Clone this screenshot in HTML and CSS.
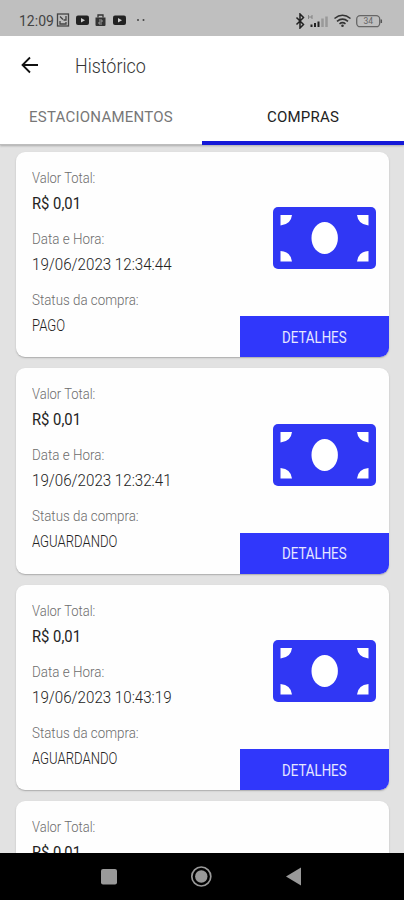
FILE: index.html
```
<!DOCTYPE html>
<html lang="pt-BR">
<head>
<meta charset="utf-8">
<meta name="viewport" content="width=device-width, initial-scale=1">
<title>Histórico</title>
<link rel="stylesheet" href="styles.css">
</head>
<body>
<svg class="defs" width="0" height="0" aria-hidden="true">
  <symbol id="banknote" viewBox="0 0 103 62">
    <rect width="103" height="62" rx="5" fill="#3037f4"/>
    <ellipse cx="51.7" cy="31" rx="13.2" ry="16" fill="#fff"/>
    <path fill="#fff" d="M7.500 8h11.500q-1 9.500-11.500 10.500zM95.500 8H84q1 9.500 11.500 10.500zM7.500 54.500h11.500q-1-9.500-11.500-10.500zM95.500 54.500H84q1-9.500 11.500-10.500z"/>
  </symbol>
</svg>
<div class="screen">
  <div class="status">
    <span class="clock"><span class="fit">12:09</span></span>
    <svg class="status-left" width="92" height="14" viewBox="0 0 92 14">
      <g fill="none" stroke="#444" stroke-width="1.300"><rect x="1.500" y="1" width="11" height="12"/><path d="M4 3.500l3 3M10 3v4H7.500M4 8v3h6V9"/></g>
      <rect x="20" y="2.500" width="13" height="9.500" rx="2" fill="#222"/><path d="M25 5l4 2.200-4 2.300z" fill="#ccc"/>
      <path d="M39.500 4.500h10V12a1 1 0 0 1-1 1h-8a1 1 0 0 1-1-1z" fill="#333"/><path d="M42 4.500V2h5v2.500" fill="none" stroke="#333" stroke-width="1.300"/><path d="M43 7h3v2h-3v2h3" fill="none" stroke="#999"/>
      <rect x="57" y="2.500" width="13" height="9.500" rx="2" fill="#222"/><path d="M62 5l4 2.200-4 2.300z" fill="#ccc"/>
      <circle cx="82" cy="7" r="1" fill="#444"/><circle cx="87.500" cy="7" r="1" fill="#444"/>
    </svg>
    <svg class="status-right" width="88" height="16" viewBox="0 0 88 16">
      <path d="M1.500 4.500l7 7L5 15V1l3.500 3.500-7 7" fill="none" stroke="#222" stroke-width="1.500"/>
      <path d="M13.500 2v4M17 2v4M13.500 4H17" stroke="#777" stroke-width=".8"/>
      <path d="M16.500 14v-2.500M20 14v-4M23.500 14V8.500" stroke="#222" stroke-width="2"/><path d="M27.500 14V5.500M31.500 14V3.500" stroke="#999" stroke-width="2.500"/>
      <g fill="none" stroke="#333" stroke-width="1.600"><path d="M39.500 5.500q8-6.500 16 0M42 8.300q5.500-4.500 11 0M44.500 10.800q3-2.300 6 0"/></g><circle cx="47.500" cy="12.800" r="1.300" fill="#333"/>
      <rect x="61.700" y="2.700" width="23" height="11" rx="3.500" fill="none" stroke="#666" stroke-width="1.300"/><path d="M86.300 6.500v3.500" stroke="#555" stroke-width="1.500"/>
      <text x="73.300" y="11.300" class="charge">34</text>
    </svg>
  </div>
  <header class="bar">
    <svg width="18" height="18" viewBox="0 0 18 18"><path d="M17 9H2M9 1.500L1.500 9 9 16.500" fill="none" stroke="#111" stroke-width="1.800"/></svg>
    <h1><span class="fit title">Histórico</span></h1>
  </header>
  <nav class="tabs"><div class="tab">ESTACIONAMENTOS</div><div class="tab active">COMPRAS</div></nav>
  <main class="list">
    <article class="card">
      <dl><dt class="l-valor">Valor Total:</dt><dd class="price">R$ 0,01</dd><dt class="l-data">Data e Hora:</dt><dd class="date">19/06/2023 12:34:44</dd><dt class="l-status">Status da compra:</dt><dd class="state">PAGO</dd></dl>
      <div class="side"><svg class="note"><use href="#banknote"/></svg><button><span>DETALHES</span></button></div>
    </article>
    <article class="card">
      <dl><dt class="l-valor">Valor Total:</dt><dd class="price">R$ 0,01</dd><dt class="l-data">Data e Hora:</dt><dd class="date">19/06/2023 12:32:41</dd><dt class="l-status">Status da compra:</dt><dd class="state">AGUARDANDO</dd></dl>
      <div class="side"><svg class="note"><use href="#banknote"/></svg><button><span>DETALHES</span></button></div>
    </article>
    <article class="card">
      <dl><dt class="l-valor">Valor Total:</dt><dd class="price">R$ 0,01</dd><dt class="l-data">Data e Hora:</dt><dd class="date">19/06/2023 10:43:19</dd><dt class="l-status">Status da compra:</dt><dd class="state">AGUARDANDO</dd></dl>
      <div class="side"><svg class="note"><use href="#banknote"/></svg><button><span>DETALHES</span></button></div>
    </article>
    <article class="card">
      <dl><dt class="l-valor">Valor Total:</dt><dd class="price">R$ 0,01</dd></dl>
    </article>
  </main>
  <footer class="system">
    <svg width="404" height="47" viewBox="0 0 404 47" fill="#999"><rect x="101" y="16" width="16" height="15.500" rx="2"/><circle cx="201.300" cy="23.500" r="6.200"/><circle cx="201.300" cy="23.500" r="9.500" fill="none" stroke="#999" stroke-width="1.700"/><path d="M286 23.500L301 14.500v18z"/></svg>
  </footer>
</div>
</body>
</html>
```
FILE: styles.css
```
* { box-sizing: border-box; }
body { margin: 0; font-family: Roboto, "Liberation Sans", sans-serif; }
.defs { display: none; }
.screen { width: 404px; height: 900px; display: flex; flex-direction: column; overflow: hidden; background: #fff; }
.status { height: 36px; flex: none; background: #bfbfbf; display: flex; padding: 13px 21px 0 19px; }
.clock { width: 37px; font-size: 14px; line-height: 16px; color: #444; }
.status-right { margin: 0 0 0 auto; }
.charge { font-size: 8.5px; fill: #666; text-anchor: middle; }
.bar { height: 54px; flex: none; display: flex; align-items: center; padding: 4px 0 0 21px; }
.bar h1 { margin: 2px 0 0 35.500px; font-size: 20px; font-weight: 300; line-height: 26px; color: #333; }
.fit { display: inline-block; transform-origin: left; }
.title { transform: scaleX(.895); }
.tabs { height: 55px; flex: none; display: flex; border-bottom: 1px solid #bdbdbd; box-shadow: 0 1px 2px #aaa; position: relative; z-index: 1; background: #fff; clip-path: inset(0 0 -5px 0); }
.tab { flex: 1; text-align: center; font-size: 15px; letter-spacing: .23px; line-height: 55px; color: #777; height: 55px; }
.tab.active { color: #222; border-bottom: 4px solid #1519d8; }
.list { flex: 1; min-height: 0; overflow: hidden; background: #e2e2e2; padding: 6.500px 15px 0 16px; display: flex; flex-direction: column; gap: 11px; }
.card { height: 205.500px; flex: none; background: #fefefe; border-radius: 9px; display: flex; justify-content: space-between; overflow: hidden; box-shadow: 0 1px 1.500px #aaa; }
dl { margin: 0; padding: 14px 0 0 16px; white-space: nowrap; width: 200px; }
dt, dd { margin: 0; line-height: 25px; transform-origin: left; width: max-content; }
dt { font-size: 15px; font-weight: 300; color: #6c6c6c; }
dd { font-size: 17px; font-weight: 300; color: #222; margin-bottom: 11px; }
.price { font-weight: 400; transform: scaleX(.87); }
.l-valor { transform: scaleX(.865); }
.l-data { transform: scaleX(.895); }
.l-status { transform: scaleX(.89); }
.date { transform: scaleX(.89); }
.state { transform: scaleX(.77); }
.side { width: 149.500px; display: flex; flex-direction: column; justify-content: space-between; }
.note { width: 103px; height: 62px; margin: 55.500px 0 0 33.500px; }
button { height: 41px; border: 0; background: #3037fb; color: #e8e8ff; font: 400 17px Roboto, sans-serif; padding: 0 0 0 1px; }
button span { display: inline-block; transform: scaleX(.78); }
.system { height: 47.500px; flex: none; background: #000; }
```
